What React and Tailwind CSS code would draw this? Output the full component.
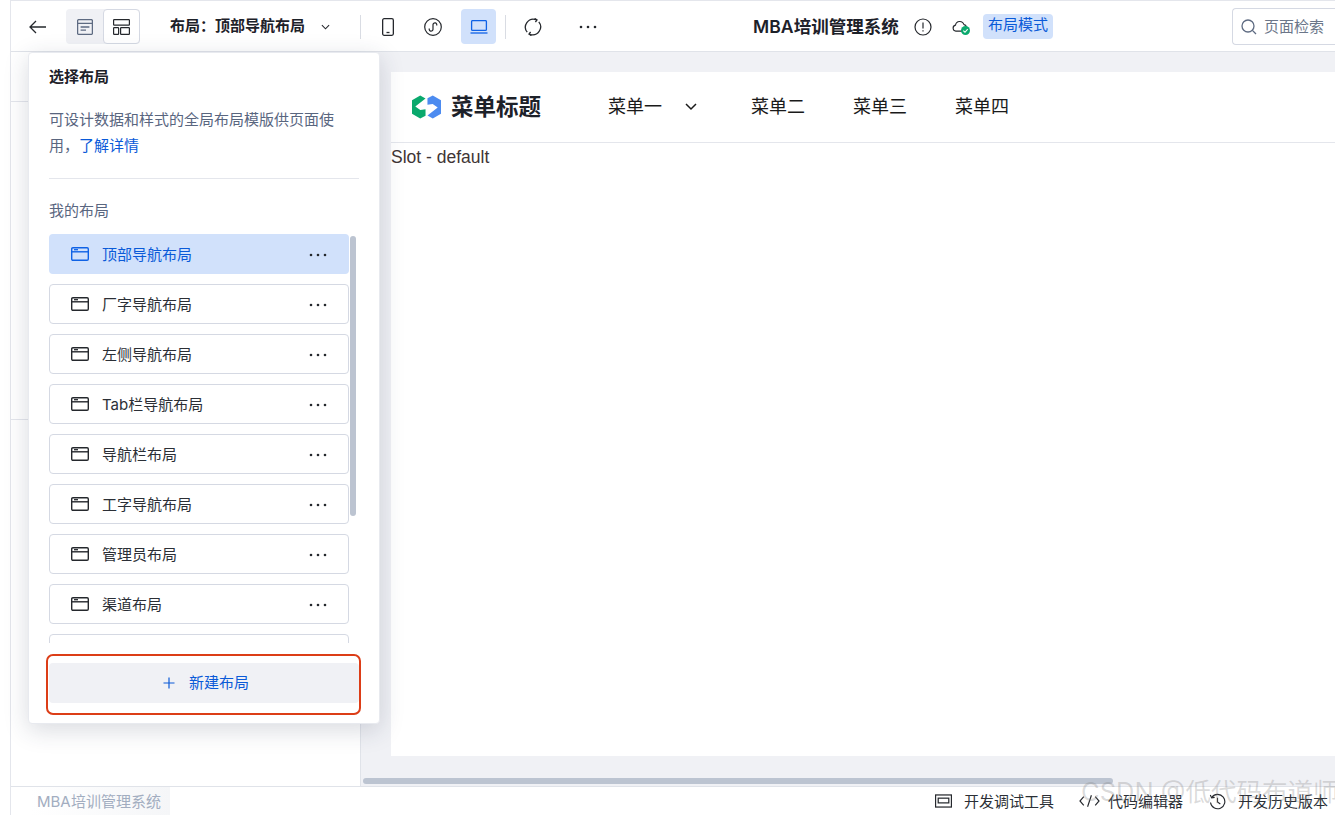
const FONT = "font-['Inter','Noto_Sans_CJK_SC',sans-serif]";

function WinIcon({ className }) {
  return (
    <svg viewBox="0 0 18 14" className={className} fill="none" stroke="currentColor" strokeWidth="1.4">
      <rect x="0.7" y="0.7" width="16.6" height="12.6" rx="1.2" />
      <path d="M0.7 4.8H17.3" />
      <path d="M3 2.7H7" strokeWidth="1.3" />
    </svg>
  );
}

function Dots({ className = "" }) {
  return (
    <svg viewBox="0 0 18 4" className={`w-[18px] h-[4px] ${className}`} fill="currentColor">
      <circle cx="2" cy="2" r="1.3" />
      <circle cx="9" cy="2" r="1.3" />
      <circle cx="16" cy="2" r="1.3" />
    </svg>
  );
}

function LayoutItem({ label, active }) {
  return (
    <div
      className={`h-10 shrink-0 rounded-[4px] flex items-center ${
        active ? "bg-[#d1e1fb] text-[#0a5ad8] pl-[22px] pr-[22px]" : "bg-white border border-[#d5d9e3] pl-[21px] pr-[21px] text-[#2b2f36]"
      }`}
    >
      <WinIcon className={`w-[18px] h-[14px] ${active ? "text-[#0f62e6]" : "text-[#25282d]"}`} />
      <span className="ml-[13px] text-[15px] leading-none flex-1">{label}</span>
      <Dots className="text-[#25282d] mt-[1px]" />
    </div>
  );
}

function Popover() {
  const items = ["厂字导航布局", "左侧导航布局", "Tab栏导航布局", "导航栏布局", "工字导航布局", "管理员布局", "渠道布局", ""];
  return (
    <div className="absolute left-[28px] top-[52px] w-[352px] h-[672px] bg-white rounded-[4px] border border-[#e8eaef] shadow-[0_6px_24px_rgba(40,50,80,0.18)] flex flex-col">
      <div className="px-[20px]">
        <div className="pt-[15px] text-[15px] leading-[18px] font-semibold text-[#1d2129]">选择布局</div>
        <p className="mt-[21px] text-[15px] leading-[26px] text-[#59667f] w-[295px]">
          可设计数据和样式的全局布局模版供页面使用，<span className="text-[#0a5ad8]">了解详情</span>
        </p>
        <div className="mt-[19px] h-px bg-[#e4e6ec] w-[310px]" />
        <div className="mt-[23px] text-[15px] leading-[18px] text-[#59667f]">我的布局</div>
      </div>
      <div className="relative mt-[14px] ml-[20px] mr-[21px] h-[409px] overflow-hidden">
        <div className="w-[300px] flex flex-col gap-[10px]">
          <LayoutItem label="顶部导航布局" active />
          {items.map((t, i) => (
            <LayoutItem key={i} label={t} />
          ))}
        </div>
        <div className="absolute right-[2px] top-[2px] w-[6px] h-[280px] rounded-full bg-[#bcc4d1]" />
      </div>
      <div className="mt-[20px] ml-[20px] w-[310px] h-10 rounded-[4px] bg-[#f0f1f5] flex items-center justify-center pl-[4px] text-[#0a5ad8]">
        <svg viewBox="0 0 12 12" className="w-[12px] h-[12px] mr-[14px]" fill="none" stroke="currentColor" strokeWidth="1.2">
          <path d="M6 0.5V11.5M0.5 6H11.5" />
        </svg>
        <span className="text-[15px] leading-none mb-[2px]">新建布局</span>
      </div>
    </div>
  );
}

function Header() {
  return (
    <div className="h-[50px] shrink-0 bg-white border-b border-[#e0e3e9] flex items-center relative">
      <svg viewBox="0 0 18 14" className="ml-[18px] w-[18px] h-[14px] text-[#25282d]" fill="none" stroke="currentColor" strokeWidth="1.3">
        <path d="M17 7H1M7 1L1 7L7 13" />
      </svg>
      <div className="ml-[19px] flex h-[35px] w-[74px] bg-[#f0f1f5] rounded-[4px]">
        <div className="w-[37px] flex items-center justify-center text-[#5e6b82]">
          <svg viewBox="0 0 16 16" className="w-[16px] h-[16px]" fill="none" stroke="currentColor" strokeWidth="1.3">
            <rect x="0.6" y="0.6" width="14.8" height="14.8" rx="1.2" />
            <path d="M0.6 4.4H15.4M3.6 8H12.4M3.6 11.2H9" />
          </svg>
        </div>
        <div className="w-[37px] bg-white border border-[#d5d9e3] rounded-[4px] flex items-center justify-center text-[#25282d]">
          <svg viewBox="0 0 17 16" className="w-[17px] h-[16px]" fill="none" stroke="currentColor" strokeWidth="1.2">
            <rect x="0.6" y="0.6" width="15.8" height="5.6" rx="0.6" />
            <rect x="0.6" y="8.6" width="5" height="6.8" rx="0.6" />
            <rect x="7.6" y="8.6" width="8.8" height="6.8" rx="0.6" />
          </svg>
        </div>
      </div>
      <div className="ml-[30px] text-[15px] font-semibold text-[#1d2129] leading-none mb-[2px]">布局：顶部导航布局</div>
      <svg viewBox="0 0 10 6" className="ml-[16px] w-[9px] h-[6px] text-[#25282d]" fill="none" stroke="currentColor" strokeWidth="1.2">
        <path d="M1 1L5 5L9 1" />
      </svg>
      <div className="ml-[30px] w-px h-[24px] bg-[#d9dce3]" />
      <svg viewBox="0 0 12 18" className="ml-[21px] w-[12px] h-[18px] text-[#25282d]" fill="none" stroke="currentColor" strokeWidth="1.3">
        <rect x="0.65" y="0.65" width="10.7" height="16.7" rx="1.5" />
        <path d="M4.5 14.5H7.5" />
      </svg>
      <svg viewBox="0 0 18 18" className="ml-[30px] w-[18px] h-[18px] text-[#25282d]" fill="none" stroke="currentColor" strokeWidth="1.2">
        <circle cx="9" cy="9" r="8.3" />
        <path d="M5.4 10.4a1.9 1.9 0 1 0 3.6 1V6.6a1.9 1.9 0 1 1 3.6 1" />
      </svg>
      <div className="ml-[19px] w-[35px] h-[35px] rounded-[4px] bg-[#d1e1fb] flex items-center justify-center text-[#0f62e6]">
        <svg viewBox="0 0 18 14" className="w-[18px] h-[14px]" fill="none" stroke="currentColor" strokeWidth="1.3">
          <rect x="1.6" y="0.6" width="14.8" height="9.8" rx="1" />
          <path d="M0.5 13H17.5" />
        </svg>
      </div>
      <div className="ml-[9px] w-px h-[24px] bg-[#d9dce3]" />
      <svg viewBox="0 0 18 18" className="ml-[18px] w-[18px] h-[18px] text-[#25282d]" fill="none" stroke="currentColor" strokeWidth="1.3">
        <path d="M3.2 14.2A8 8 0 0 1 12 1.6" />
        <path d="M14.8 3.8A8 8 0 0 1 6 16.4" />
        <path d="M10.6 0.4L13 1.9L11.4 4M7.4 17.6L5 16.1L6.6 14" />
      </svg>
      <Dots className="ml-[37px] text-[#25282d]" />
      <div className="ml-[156px] text-[17.5px] font-semibold text-[#1d2129] leading-none whitespace-nowrap w-[146px] [word-spacing:-4px]">MBA 培训管理系统</div>
      <svg viewBox="0 0 18 18" className="ml-[15px] w-[18px] h-[18px] text-[#25282d]" fill="none" stroke="currentColor" strokeWidth="1.2">
        <circle cx="9" cy="9" r="8" />
        <path d="M9 4.4V10.4M9 12.2V13.6" />
      </svg>
      <div className="relative ml-[20px] w-[19px] h-[18px]">
        <svg viewBox="0 0 18 14" className="absolute left-0 top-[2px] w-[17px] h-[13px] text-[#25282d]" fill="none" stroke="currentColor" strokeWidth="1.2">
          <path d="M11 12H4A3.3 3.3 0 0 1 3.6 5.5A4.6 4.6 0 0 1 12.6 5" />
          <path d="M12.6 5A3 3 0 0 1 15.4 7.5" />
        </svg>
        <div className="absolute left-[9px] top-[8px] w-[9px] h-[9px] rounded-full bg-[#0aa96d] flex items-center justify-center">
          <svg viewBox="0 0 8 8" className="w-[7px] h-[7px]" fill="none" stroke="white" strokeWidth="1.2">
            <path d="M1.5 4.2L3.4 6L6.5 2.4" />
          </svg>
        </div>
      </div>
      <div className="ml-[12px] w-[70px] h-[25px] rounded-[4px] bg-[#d1e1fb] text-[#0a5ad8] text-[15px] leading-[22px] text-center">布局模式</div>
      <div className="ml-auto w-[103px] h-[37px] bg-white border border-[#d5d9e3] border-r-0 rounded-l-[4px] flex items-center pl-[8px] text-[#5e6b82]">
        <svg viewBox="0 0 16 16" className="w-[16px] h-[16px]" fill="none" stroke="currentColor" strokeWidth="1.3">
          <circle cx="7" cy="7" r="6" />
          <path d="M11.4 11.4L15 15" />
        </svg>
        <span className="ml-[7px] text-[15px] leading-none whitespace-nowrap text-[#6b7689]">页面检索</span>
      </div>
    </div>
  );
}

function Logo() {
  return (
    <svg viewBox="0 0 30 24" className="w-[29px] h-[24px]">
      <path d="M0 5L8.5 0L14 3.2L3.4 11.4L8.6 15.2L14 14.2V21L8.5 24L0 19Z" fill="#0aa96d" />
      <path d="M30 5V19L21.5 24L16 20.8L26.6 12.6L21.4 8.8L16 9.8V3L21.5 0Z" fill="#4c8bf0" />
    </svg>
  );
}

function Canvas() {
  return (
    <div className="flex-1 min-w-0 bg-[#f0f1f5] flex flex-col pl-[30px] pt-[20px] relative">
      <div className="h-[684px] bg-white">
        <div className="h-[71px] border-b border-[#e4e6ec] flex items-center pl-[21px] text-[#1a1a1a]">
          <Logo />
          <span className="ml-[10px] text-[22.5px] font-bold leading-none text-[#1d2129]">菜单标题</span>
          <span className="ml-[67px] text-[18px] leading-none">菜单一</span>
          <svg viewBox="0 0 12 8" className="ml-[23px] w-[12px] h-[8px]" fill="none" stroke="currentColor" strokeWidth="1.5">
            <path d="M1 1L6 6L11 1" />
          </svg>
          <span className="ml-[54px] text-[18px] leading-none">菜单二</span>
          <span className="ml-[48px] text-[18px] leading-none">菜单三</span>
          <span className="ml-[48px] text-[18px] leading-none">菜单四</span>
        </div>
        <div className="font-['Liberation_Sans',sans-serif] text-[17.5px] leading-[28px] text-[#3f3535]">Slot - default</div>
      </div>
      <div className="absolute left-[2px] top-[726px] w-[750px] h-[6px] rounded-full bg-[#bcc4d1]" />
    </div>
  );
}

function Footer() {
  return (
    <div className="h-[29px] shrink-0 bg-white border-t border-[#e0e3e9] flex items-center relative">
      <div className="ml-[20px] w-[139px] h-full pl-[6px] bg-gradient-to-r from-white to-[#f5f6f8] text-[15px] leading-[29px] text-[#a2adc0] whitespace-nowrap [word-spacing:-4px]">MBA 培训管理系统</div>
      <div className="ml-auto flex items-center text-[15px] leading-none text-[#2b2f36] pr-[7px] whitespace-nowrap">
        <svg viewBox="0 0 18 14" className="w-[17px] h-[14px] text-[#25282d]" fill="none" stroke="currentColor" strokeWidth="1.3">
          <rect x="0.6" y="0.6" width="16.8" height="12.8" />
          <rect x="3.4" y="4" width="11.2" height="5" />
        </svg>
        <span className="ml-[12px]">开发调试工具</span>
        <svg viewBox="0 0 22 14" className="ml-[25px] w-[21px] h-[14px] text-[#25282d]" fill="none" stroke="currentColor" strokeWidth="1.2">
          <path d="M5 2.5L1 7L5 11.5M17 2.5L21 7L17 11.5M13 1L9 13" />
        </svg>
        <span className="ml-[8px]">代码编辑器</span>
        <svg viewBox="0 0 18 18" className="ml-[26px] w-[17px] h-[17px] text-[#25282d]" fill="none" stroke="currentColor" strokeWidth="1.2">
          <path d="M3 4.6A7.6 7.6 0 1 1 1.6 10" />
          <path d="M1.4 2.2L2.8 5.2L6 4.6M9 5V9.6L12 11.6" />
        </svg>
        <span className="ml-[12px]">开发历史版本</span>
      </div>
    </div>
  );
}

export default function App() {
  return (
    <div className={`relative w-[1335px] h-[815px] overflow-hidden bg-white ${FONT}`}>
      <div className="ml-[10px] h-full border-l border-[#e4e6ec] flex flex-col">
        <div className="h-[2px] shrink-0 border-t border-[#e4e6ec]" />
        <Header />
        <div className="flex-1 min-h-0 flex">
          <div className="w-[350px] shrink-0 bg-white border-r border-[#e0e3e9] flex flex-col">
            <div className="h-[50px] border-b border-[#e4e6ec]" />
            <div className="h-[318px] border-b border-[#e4e6ec]" />
          </div>
          <Canvas />
        </div>
        <Footer />
      </div>
      <Popover />
      <div className="absolute left-[46px] top-[654px] w-[315px] h-[61px] rounded-[7px] border-2 border-[#dc3d17]" />
      <div className="absolute left-[1081px] top-[776px] text-[25.5px] leading-[32px] text-[rgba(130,130,130,0.28)] whitespace-nowrap pointer-events-none">
        CSDN @低代码布道师
      </div>
    </div>
  );
}
